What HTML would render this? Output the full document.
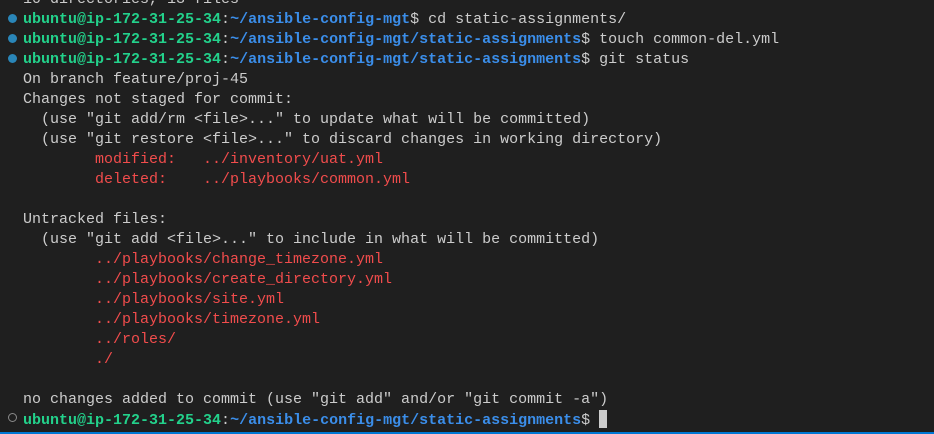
<!DOCTYPE html>
<html><head><meta charset="utf-8"><style>
html,body{margin:0;padding:0;width:934px;height:434px;overflow:hidden;background:#1f1f1f;}
#t{position:absolute;left:23px;top:-10px;font-family:"Liberation Mono","DejaVu Sans Mono",monospace;font-size:15px;line-height:20px;color:#cccccc;white-space:pre;}
.g{color:#23d18b;font-weight:bold}.b{color:#3b8eea;font-weight:bold}.r{color:#f14c4c}
.d{position:absolute;left:8px;width:9px;height:9px;border-radius:50%;background:#2a86b8}
.o{position:absolute;left:8px;width:7px;height:7px;border-radius:50%;border:1px solid #8a8a8a}
.cur{display:inline-block;width:8px;height:18px;background:#cccccc;vertical-align:-4px}
#bar{position:absolute;left:0;top:432px;width:934px;height:2px;background:#0078d4}
</style></head><body>
<div class="d" style="top:14px"></div>
<div class="d" style="top:34px"></div>
<div class="d" style="top:54px"></div>
<div class="o" style="top:413px"></div>
<div id="t">10 directories, 13 files
<span class="g">ubuntu@ip-172-31-25-34</span>:<span class="b">~/ansible-config-mgt</span>$ cd static-assignments/
<span class="g">ubuntu@ip-172-31-25-34</span>:<span class="b">~/ansible-config-mgt/static-assignments</span>$ touch common-del.yml
<span class="g">ubuntu@ip-172-31-25-34</span>:<span class="b">~/ansible-config-mgt/static-assignments</span>$ git status
On branch feature/proj-45
Changes not staged for commit:
  (use "git add/rm &lt;file&gt;..." to update what will be committed)
  (use "git restore &lt;file&gt;..." to discard changes in working directory)
<span class="r">        modified:   ../inventory/uat.yml</span>
<span class="r">        deleted:    ../playbooks/common.yml</span>

Untracked files:
  (use "git add &lt;file&gt;..." to include in what will be committed)
<span class="r">        ../playbooks/change_timezone.yml</span>
<span class="r">        ../playbooks/create_directory.yml</span>
<span class="r">        ../playbooks/site.yml</span>
<span class="r">        ../playbooks/timezone.yml</span>
<span class="r">        ../roles/</span>
<span class="r">        ./</span>

no changes added to commit (use "git add" and/or "git commit -a")
<span class="g">ubuntu@ip-172-31-25-34</span>:<span class="b">~/ansible-config-mgt/static-assignments</span>$ <span class="cur"></span></div>
<div id="bar"></div>
</body></html>
